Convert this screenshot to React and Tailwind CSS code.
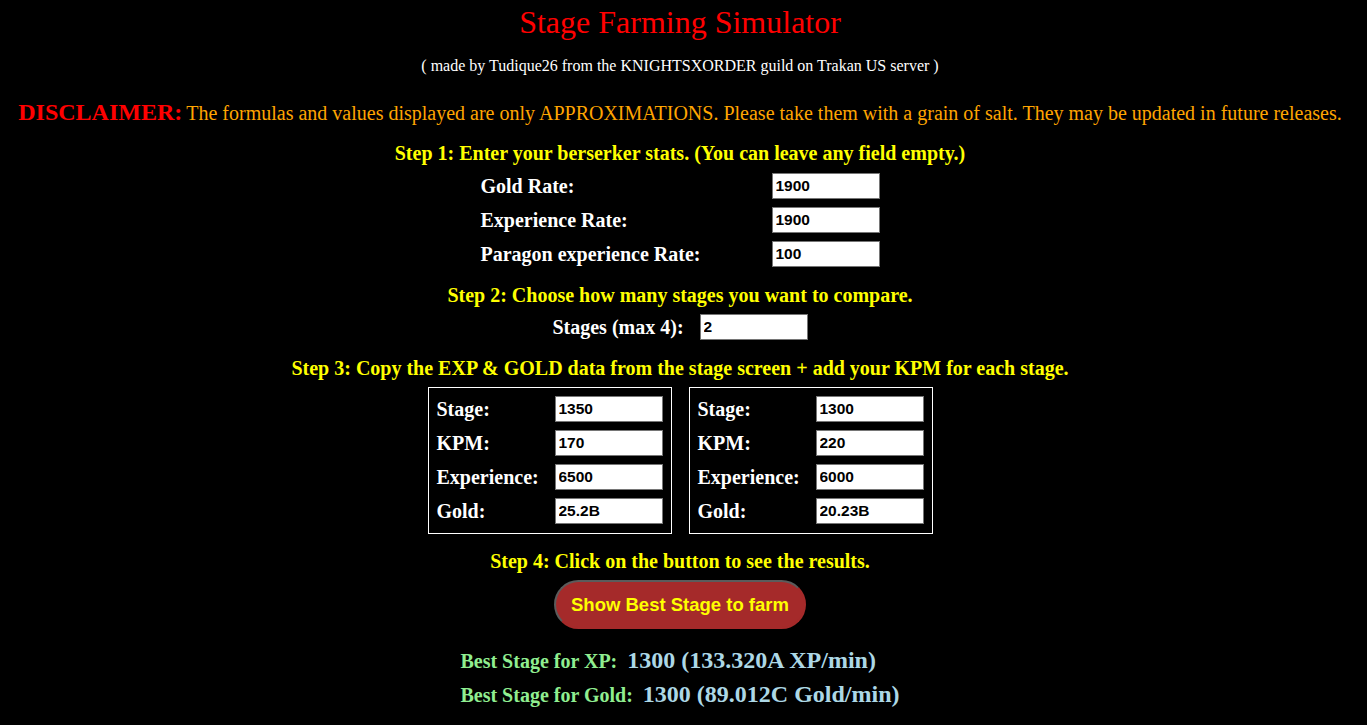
import React from 'react';

const serif = "font-['Liberation_Serif','Times_New_Roman',serif]";

const stats = [
    {label: 'Gold Rate:', value: '1900'},
    {label: 'Experience Rate:', value: '1900'},
    {label: 'Paragon experience Rate:', value: '100'},
];

const stages = [
    {stage: '1350', kpm: '170', exp: '6500', gold: '25.2B'},
    {stage: '1300', kpm: '220', exp: '6000', gold: '20.23B'},
];

function Field({value}) {
    return (
        <input
            type="text"
            defaultValue={value}
            className="w-[108px] h-[26px] bg-white border border-[#767676] px-[3px] text-black font-bold text-[15.5px] leading-[24px] font-['Liberation_Sans',Arial,sans-serif] outline-none"
        />
    );
}

function StageBox({data}) {
    const rows = [
        ['Stage:', data.stage],
        ['KPM:', data.kpm],
        ['Experience:', data.exp],
        ['Gold:', data.gold],
    ];
    return (
        <div className="border border-white px-2 pt-2 pb-[9px] grid grid-cols-[118px_108px] gap-y-2 items-center">
            {rows.map(([label, value]) => (
                <React.Fragment key={label}>
                    <span className="text-white font-bold text-[20px] leading-[26px] text-left">{label}</span>
                    <Field value={value} />
                </React.Fragment>
            ))}
        </div>
    );
}

export default function App() {
    return (
        <div className={`min-h-screen bg-black ${serif} pr-[7px] flex flex-col items-center text-center`}>
            {/* Header */}
            <h1 className="mt-1 text-[32px] leading-[36px] text-[#ff0000]">Stage Farming Simulator</h1>
            <p className="mt-4 text-[16px] leading-[20px] text-white">
                ( made by Tudique26 from the KNIGHTSXORDER guild on Trakan US server )
            </p>
            <p className="mt-[21px] h-[30px] leading-[30px] whitespace-nowrap">
                <span className="text-[24px] leading-[30px] font-bold text-[#ff0000]">DISCLAIMER:</span>{' '}
                <span className="text-[20px] leading-[30px] text-[#ffa500]">
                    The formulas and values displayed are only APPROXIMATIONS. Please take them with a grain of salt. They may be updated in future releases.
                </span>
            </p>

            {/* Step 1 */}
            <h3 className="mt-[14px] text-[20px] leading-[24px] font-bold text-[#ffff00]">
                Step 1: Enter your berserker stats. (You can leave any field empty.)
            </h3>
            <div className="mt-2 grid grid-cols-[291px_108px] gap-y-2 items-center">
                {stats.map((s) => (
                    <React.Fragment key={s.label}>
                        <span className="text-white font-bold text-[20px] leading-[26px] text-left">{s.label}</span>
                        <Field value={s.value} />
                    </React.Fragment>
                ))}
            </div>

            {/* Step 2 */}
            <h3 className="mt-4 text-[20px] leading-[24px] font-bold text-[#ffff00]">
                Step 2: Choose how many stages you want to compare.
            </h3>
            <div className="mt-[7px] flex items-center gap-4">
                <span className="text-white font-bold text-[20px] leading-[26px]">Stages (max 4):</span>
                <Field value="2" />
            </div>

            {/* Step 3 */}
            <h3 className="mt-[16px] text-[20px] leading-[24px] font-bold text-[#ffff00]">
                Step 3: Copy the EXP &amp; GOLD data from the stage screen + add your KPM for each stage.
            </h3>
            <div className="mt-[7px] flex gap-[17px]">
                {stages.map((d) => (
                    <StageBox key={d.stage} data={d} />
                ))}
            </div>

            {/* Step 4 */}
            <h3 className="mt-[15px] text-[20px] leading-[24px] font-bold text-[#ffff00]">
                Step 4: Click on the button to see the results.
            </h3>
            <button className="mt-[7px] w-[252px] h-[49px] rounded-full bg-[#a52a2a] border-2 border-t-[#5b5b5b] border-l-[#5b5b5b] border-r-[#a52a2a] border-b-[#a52a2a] text-[#ffff00] font-bold text-[18.5px] font-['Liberation_Sans',Arial,sans-serif]">
                Show Best Stage to farm
            </button>

            {/* Results */}
            <div className="mt-[16px] flex flex-col items-start text-left font-bold gap-[4px]">
                <div className="h-[30px] leading-[30px] whitespace-nowrap">
                    <span className="text-[20px] leading-[30px] text-[#90ee90]">Best Stage for XP:</span>
                    <span className="ml-[10px] text-[24px] leading-[30px] text-[#add8e6]">1300 (133.320A XP/min)</span>
                </div>
                <div className="h-[30px] leading-[30px] whitespace-nowrap">
                    <span className="text-[20px] leading-[30px] text-[#90ee90]">Best Stage for Gold:</span>
                    <span className="ml-[10px] text-[24px] leading-[30px] text-[#add8e6]">1300 (89.012C Gold/min)</span>
                </div>
            </div>
        </div>
    );
}
